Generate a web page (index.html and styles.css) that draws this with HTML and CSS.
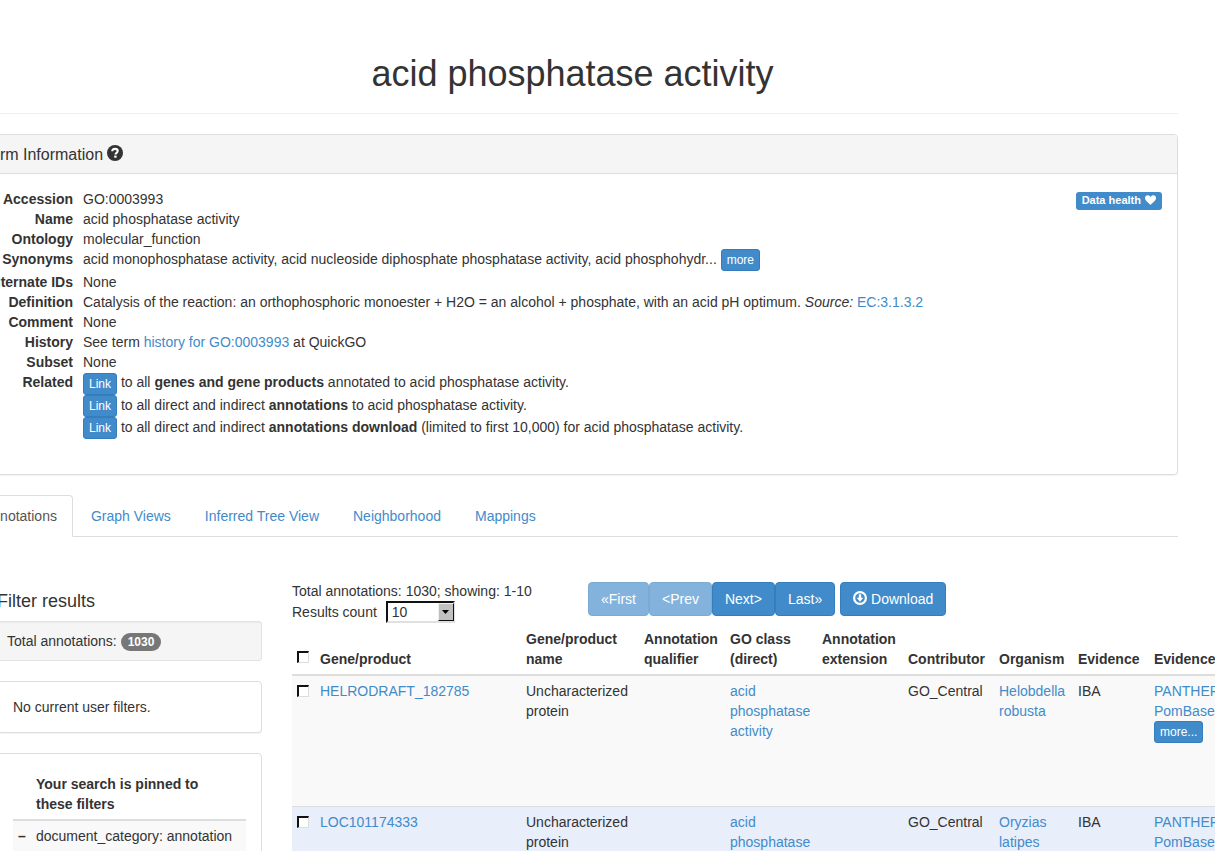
FILE: index.html
```html
<!DOCTYPE html>
<html lang="en">
<head>
<meta charset="utf-8">
<title>acid phosphatase activity</title>
<link rel="stylesheet" href="styles.css">
</head>
<body>
<div class="page">
  <header class="page-header"><h1>acid phosphatase activity</h1></header>

  <section class="panel term">
    <h2 class="panel-heading">Term Information
      <svg class="icon-help" viewBox="0 0 16 16" aria-hidden="true"><circle cx="8" cy="8" r="8" fill="#333"/><path d="M5.200 6.300C5.200 4.400 6.500 3.900 8 3.900s2.700.7 2.700 2.200c0 1.700-2.200 1.700-2.200 3.300" fill="none" stroke="#fff" stroke-width="2.100"/><rect x="7.200" y="10.600" width="2.400" height="2.100" fill="#fff"/></svg>
    </h2>
    <div class="panel-body">
      <dl class="facts">
        <dt>Accession</dt><dd>GO:0003993</dd>
        <dt>Name</dt><dd>acid phosphatase activity</dd>
        <dt>Ontology</dt><dd>molecular_function</dd>
        <dt>Synonyms</dt><dd class="synonyms">acid monophosphatase activity, acid nucleoside diphosphate phosphatase activity, acid phosphohydr... <button class="btn btn-xs" type="button">more</button></dd>
        <dt>Alternate IDs</dt><dd>None</dd>
        <dt>Definition</dt><dd>Catalysis of the reaction: an orthophosphoric monoester + H2O = an alcohol + phosphate, with an acid pH optimum. <em>Source:</em> <a href="#">EC:3.1.3.2</a></dd>
        <dt>Comment</dt><dd>None</dd>
        <dt>History</dt><dd>See term <a href="#">history for GO:0003993</a> at QuickGO</dd>
        <dt>Subset</dt><dd>None</dd>
        <dt>Related</dt>
        <dd>
          <div><a class="btn btn-xs" href="#">Link</a> to all <strong>genes and gene products</strong> annotated to acid phosphatase activity.</div>
          <div><a class="btn btn-xs" href="#">Link</a> to all direct and indirect <strong>annotations</strong> to acid phosphatase activity.</div>
          <div><a class="btn btn-xs" href="#">Link</a> to all direct and indirect <strong>annotations download</strong> (limited to first 10,000) for acid phosphatase activity.</div>
        </dd>
      </dl>
      <a class="health" href="#">Data health <svg class="icon-heart" viewBox="0 0 11 10" aria-hidden="true"><path d="M5.500 9.800C3.500 7.800 0 5.500 0 2.900 0 1.200 1.200.2 2.700.2c1.200 0 2.200.7 2.800 1.700C6.100.9 7.100.2 8.300.2 9.800.2 11 1.200 11 2.900c0 2.600-3.500 4.900-5.500 6.900z" fill="#fff"/></svg></a>
    </div>
  </section>

  <nav class="tabs">
    <a class="tab active" href="#">Annotations</a>
    <a class="tab" href="#">Graph Views</a>
    <a class="tab" href="#">Inferred Tree View</a>
    <a class="tab" href="#">Neighborhood</a>
    <a class="tab" href="#">Mappings</a>
  </nav>

  <div class="content">
    <aside class="sidebar">
      <h3>Filter results</h3>
      <div class="well">Total annotations: <span class="badge">1030</span></div>
      <div class="panel box">No current user filters.</div>
      <div class="panel box">
        <table class="pinned">
          <thead><tr><th class="sign"></th><th>Your search is pinned to<br>these filters</th></tr></thead>
          <tbody><tr><td class="sign"><strong>–</strong></td><td>document_category: annotation</td></tr></tbody>
        </table>
      </div>
    </aside>

    <main class="results">
      <div class="toolbar">
        <div class="summary">
          <div>Total annotations: 1030; showing: 1-10</div>
          <div class="count">
            <label for="count">Results count</label>
            <span class="select"><select id="count"><option>10</option><option>25</option><option>50</option><option>100</option></select><span class="arrow"><svg viewBox="0 0 7 4" aria-hidden="true"><path d="M0 0h7L3.500 4z"/></svg></span></span>
          </div>
        </div>
        <div class="actions">
          <div class="pager">
            <button class="btn" type="button" disabled>«First</button>
            <button class="btn" type="button" disabled>&lt;Prev</button>
            <button class="btn" type="button">Next&gt;</button>
            <button class="btn" type="button">Last»</button>
          </div>
          <button class="btn" type="button"><svg class="icon-download" viewBox="0 0 14 14" aria-hidden="true"><circle cx="7" cy="7" r="5.900" fill="none" stroke="#fff" stroke-width="2.200"/><path d="M5.800 3.200h2.400v3.600h2.200L7 10.800 3.600 6.800h2.200z" fill="#fff"/></svg> Download</button>
        </div>
      </div>

      <table class="grid">
        <colgroup><col class="c-check"><col class="c-gene"><col class="c-name"><col class="c-qualifier"><col class="c-class"><col class="c-extension"><col class="c-contributor"><col class="c-organism"><col class="c-evidence"><col class="c-with"></colgroup>
        <thead>
          <tr><th><input type="checkbox" aria-label="Select all"></th><th>Gene/product</th><th>Gene/product name</th><th>Annotation qualifier</th><th>GO class (direct)</th><th>Annotation extension</th><th>Contributor</th><th>Organism</th><th>Evidence</th><th>Evidence with</th></tr>
        </thead>
        <tbody>
          <tr><td><input type="checkbox" aria-label="Select HELRODRAFT_182785"></td><td><a href="#">HELRODRAFT_182785</a></td><td>Uncharacterized protein</td><td></td><td><a href="#">acid phosphatase activity</a></td><td></td><td>GO_Central</td><td><a href="#">Helobdella robusta</a></td><td>IBA</td><td><a href="#">PANTHER:</a><br><a href="#">PomBase:</a><br><button class="btn btn-xs" type="button">more...</button></td></tr>
          <tr class="hover"><td><input type="checkbox" aria-label="Select LOC101174333"></td><td><a href="#">LOC101174333</a></td><td>Uncharacterized protein</td><td></td><td><a href="#">acid phosphatase activity</a></td><td></td><td>GO_Central</td><td><a href="#">Oryzias latipes</a></td><td>IBA</td><td><a href="#">PANTHER:</a><br><a href="#">PomBase:</a></td></tr>
        </tbody>
      </table>
    </main>
  </div>
</div>
</body>
</html>
```
FILE: styles.css
```css
* { box-sizing: border-box; }

body {
  height: 100vh;
  margin: 0;
  overflow: hidden;
  background: #fff;
  color: #333;
  font: 14px/20px "Liberation Sans", Arial, sans-serif;
}

a { color: #428bca; text-decoration: none; }
h1, h2, h3, dl, dd { margin: 0; font-weight: normal; }

.page { margin: 0 37px 0 -33px; padding-top: 54px; }

.page-header {
  margin-bottom: 20px;
  padding-bottom: 19px;
  border-bottom: 1px solid #eee;
  text-align: center;
}
.page-header h1 { font-size: 36px; line-height: 40px; }

.panel {
  margin-bottom: 20px;
  border: 1px solid #ddd;
  border-radius: 4px;
  background: #fff;
  box-shadow: 0 1px 1px rgba(0, 0, 0, .05);
}
.panel-heading {
  padding: 10px 15px 9px;
  border-bottom: 1px solid #ddd;
  border-radius: 3px 3px 0 0;
  background: #f5f5f5;
  font-size: 16px;
  line-height: 18px;
}
.icon-help { width: 16px; height: 16px; vertical-align: -1px; }
.panel-body {
  display: flex;
  align-items: flex-start;
  justify-content: space-between;
  padding: 15px 15px 35px;
}

.facts {
  display: grid;
  grid-template-columns: 90px 1fr;
  column-gap: 10px;
}
.facts dt { font-weight: bold; text-align: right; white-space: nowrap; }
.facts .synonyms { padding-bottom: 1px; }

.btn {
  display: inline-block;
  height: 34px;
  padding: 6px 12px;
  border: 1px solid #357ebd;
  border-radius: 4px;
  background: #428bca;
  color: #fff;
  font: inherit;
  vertical-align: middle;
  white-space: nowrap;
}
.btn:disabled { opacity: .65; }
.btn-xs {
  height: 22px;
  padding: 1px 5px;
  border-radius: 3px;
  font-size: 12px;
  line-height: 18px;
}

.health {
  margin-top: 3px;
  padding: 0 6px 1px;
  border-radius: 3px;
  background: #428bca;
  color: #fff;
  font-size: 11px;
  font-weight: bold;
  line-height: 17px;
  white-space: nowrap;
}
.icon-heart { width: 11px; height: 10px; margin-left: 1px; vertical-align: -1px; }

.tabs {
  display: flex;
  gap: 2px;
  border-bottom: 1px solid #ddd;
}
.tab {
  margin-bottom: -1px;
  padding: 10px 15px;
  border: 1px solid transparent;
  border-radius: 4px 4px 0 0;
}
.tab.active {
  border-color: #ddd #ddd #fff;
  background: #fff;
  color: #555;
}

.content {
  display: flex;
  gap: 30px;
  padding: 44px 15px 0 30px;
}
.sidebar { flex: 0 0 265px; }
.sidebar h3 { margin: 10px 0; font-size: 18px; }
.well {
  margin-bottom: 20px;
  padding: 9px;
  border: 1px solid #e3e3e3;
  border-radius: 3px;
  background: #f5f5f5;
  box-shadow: inset 0 1px 1px rgba(0, 0, 0, .05);
}
.badge {
  display: inline-block;
  padding: 3px 7px;
  border-radius: 10px;
  background: #777;
  color: #fff;
  font-size: 12px;
  font-weight: bold;
  line-height: 12px;
  vertical-align: baseline;
}
.box { padding: 15px; }

table { border-collapse: collapse; table-layout: fixed; }
th, td { padding: 5px; text-align: left; vertical-align: top; }
th { border-bottom: 2px solid #ddd; vertical-align: bottom; }
tbody tr { background: #f9f9f9; }
.pinned { width: 100%; }
.pinned .sign { width: 18px; }

.results { flex: 1; min-width: 0; }
.toolbar { display: flex; padding-bottom: 1px; }
.summary { flex: 0 0 296px; }
.count { display: flex; gap: 9px; line-height: 22px; }
.actions { display: flex; align-items: flex-start; gap: 5px; padding-top: 1px; }
.pager { display: flex; }
.icon-download { width: 14px; height: 14px; vertical-align: -1px; }

.select { position: relative; display: block; width: 69px; height: 22px; }
.select select {
  display: block;
  width: 100%;
  height: 100%;
  padding: 0 4px;
  appearance: none;
  border: 2px solid;
  border-color: #111 #e0e0e0 #e0e0e0 #111;
  border-radius: 0;
  background: #fff;
  color: #333;
  font: inherit;
  line-height: 18px;
}
.arrow {
  position: absolute;
  top: 2px;
  right: 1px;
  display: flex;
  align-items: center;
  justify-content: center;
  width: 16px;
  height: 18px;
  border: 1px solid;
  border-color: #eee #111 #111 #eee;
  background: #c0c0c0;
  pointer-events: none;
}
.arrow svg { width: 7px; height: 4px; }

.grid { width: 1007px; }
.grid tbody tr { height: 131px; }
.grid tbody tr + tr { border-top: 1px solid #ddd; }
.grid .hover { background: #e8eefa; }
.c-check { width: 23px; }
.c-gene { width: 206px; }
.c-name { width: 118px; }
.c-qualifier { width: 86px; }
.c-class { width: 92px; }
.c-extension { width: 86px; }
.c-contributor { width: 91px; }
.c-organism { width: 79px; }
.c-evidence { width: 76px; }
.c-with { width: 150px; }

input[type="checkbox"] {
  display: block;
  width: 12px;
  height: 12px;
  margin: 4px 0;
  appearance: none;
  border: solid;
  border-width: 2px 1px 1px 2px;
  border-color: #111 #ddd #ddd #111;
  background: #fff;
}
th input[type="checkbox"] { margin-bottom: 6px; }
```
